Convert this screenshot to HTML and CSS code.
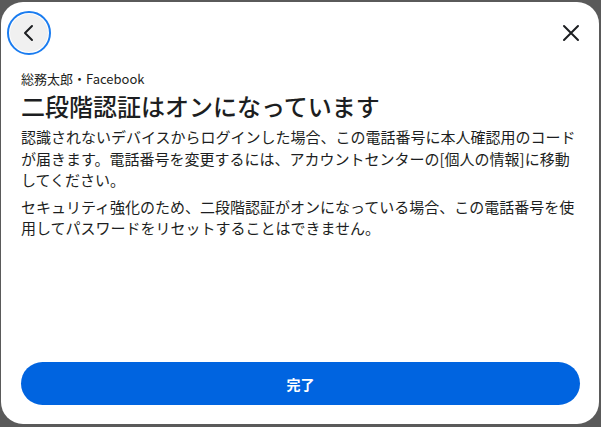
FILE: index.html
```html
<!DOCTYPE html>
<html lang="ja">

<head>
    <meta charset="UTF-8">
    <meta name="viewport" content="width=device-width, initial-scale=1.0">
    <title>二段階認証</title>

    <link rel="stylesheet" href="styles.css">
</head>

<body>
    <div class="dialog">
        <div class="dialog-header">
            <button class="back-button" aria-label="戻る">
                <svg width="20" height="20" viewBox="0 0 20 20">
                    <path d="M13 3 L6 10 L13 17" fill="none" stroke="#1c1e21" stroke-width="2" stroke-linecap="round" stroke-linejoin="round"/>
                </svg>
            </button>
            <button class="close-button" aria-label="閉じる">
                <svg width="20" height="20" viewBox="0 0 20 20">
                    <path d="M3 3 L17 17 M17 3 L3 17" fill="none" stroke="#1c1e21" stroke-width="2" stroke-linecap="round"/>
                </svg>
            </button>
        </div>

        <div class="dialog-body">
            <div class="account-name">総務太郎・Facebook</div>
            <h1>二段階認証はオンになっています</h1>
            <p>認識されないデバイスからログインした場合、この電話番号に本人確認用のコードが届きます。電話番号を変更するには、アカウントセンターの[個人の情報]に移動してください。</p>
            <p>セキュリティ強化のため、二段階認証がオンになっている場合、この電話番号を使用してパスワードをリセットすることはできません。</p>
        </div>

        <div class="dialog-footer">
            <button class="done-button">完了</button>
        </div>
    </div>
</body>

</html>
```

FILE: styles.css
```css
html, body {
    margin: 0;
    height: 100%;
}

body {
    background-color: #5a5a5a;
    font-family: "Noto Sans CJK JP", "Noto Sans", sans-serif;
    color: #1c1e21;
    padding: 2px 2px 3px 1px;
    box-sizing: border-box;
}

.dialog {
    height: 100%;
    background-color: white;
    border-radius: 22px;
    padding: 0 19px 19px 20px;
    box-sizing: border-box;
    display: flex;
    flex-direction: column;
}

.dialog-header {
    display: flex;
    justify-content: space-between;
    align-items: center;
    padding-top: 9px;
    height: 44px;
}

.back-button {
    width: 40px;
    height: 40px;
    margin-left: -12px;
    border-radius: 50%;
    border: none;
    background-color: #f0f0f0;
    outline: 2px solid #1a7cf0;
    outline-offset: 0;
    box-shadow: inset 0 0 0 1px white;
    display: flex;
    align-items: center;
    justify-content: center;
    padding: 0;
}

.close-button {
    width: 36px;
    height: 36px;
    margin-right: -9px;
    border: none;
    background: none;
    display: flex;
    align-items: center;
    justify-content: center;
    padding: 0;
}

.dialog-body {
    flex: 1;
    padding-top: 15px;
}

.account-name {
    font-size: 13px;
    line-height: 18px;
}

h1 {
    font-size: 24px;
    font-weight: 500;
    line-height: 28px;
    margin: 4px 0 6px 0;
}

p {
    font-size: 15px;
    line-height: 21.5px;
    margin: 0 0 5px 0;
}

.done-button {
    width: 100%;
    height: 43px;
    border: none;
    border-radius: 22px;
    background-color: #0064e0;
    color: white;
    font-family: "Noto Sans CJK JP", sans-serif;
    font-size: 14px;
    font-weight: bold;
}
```
